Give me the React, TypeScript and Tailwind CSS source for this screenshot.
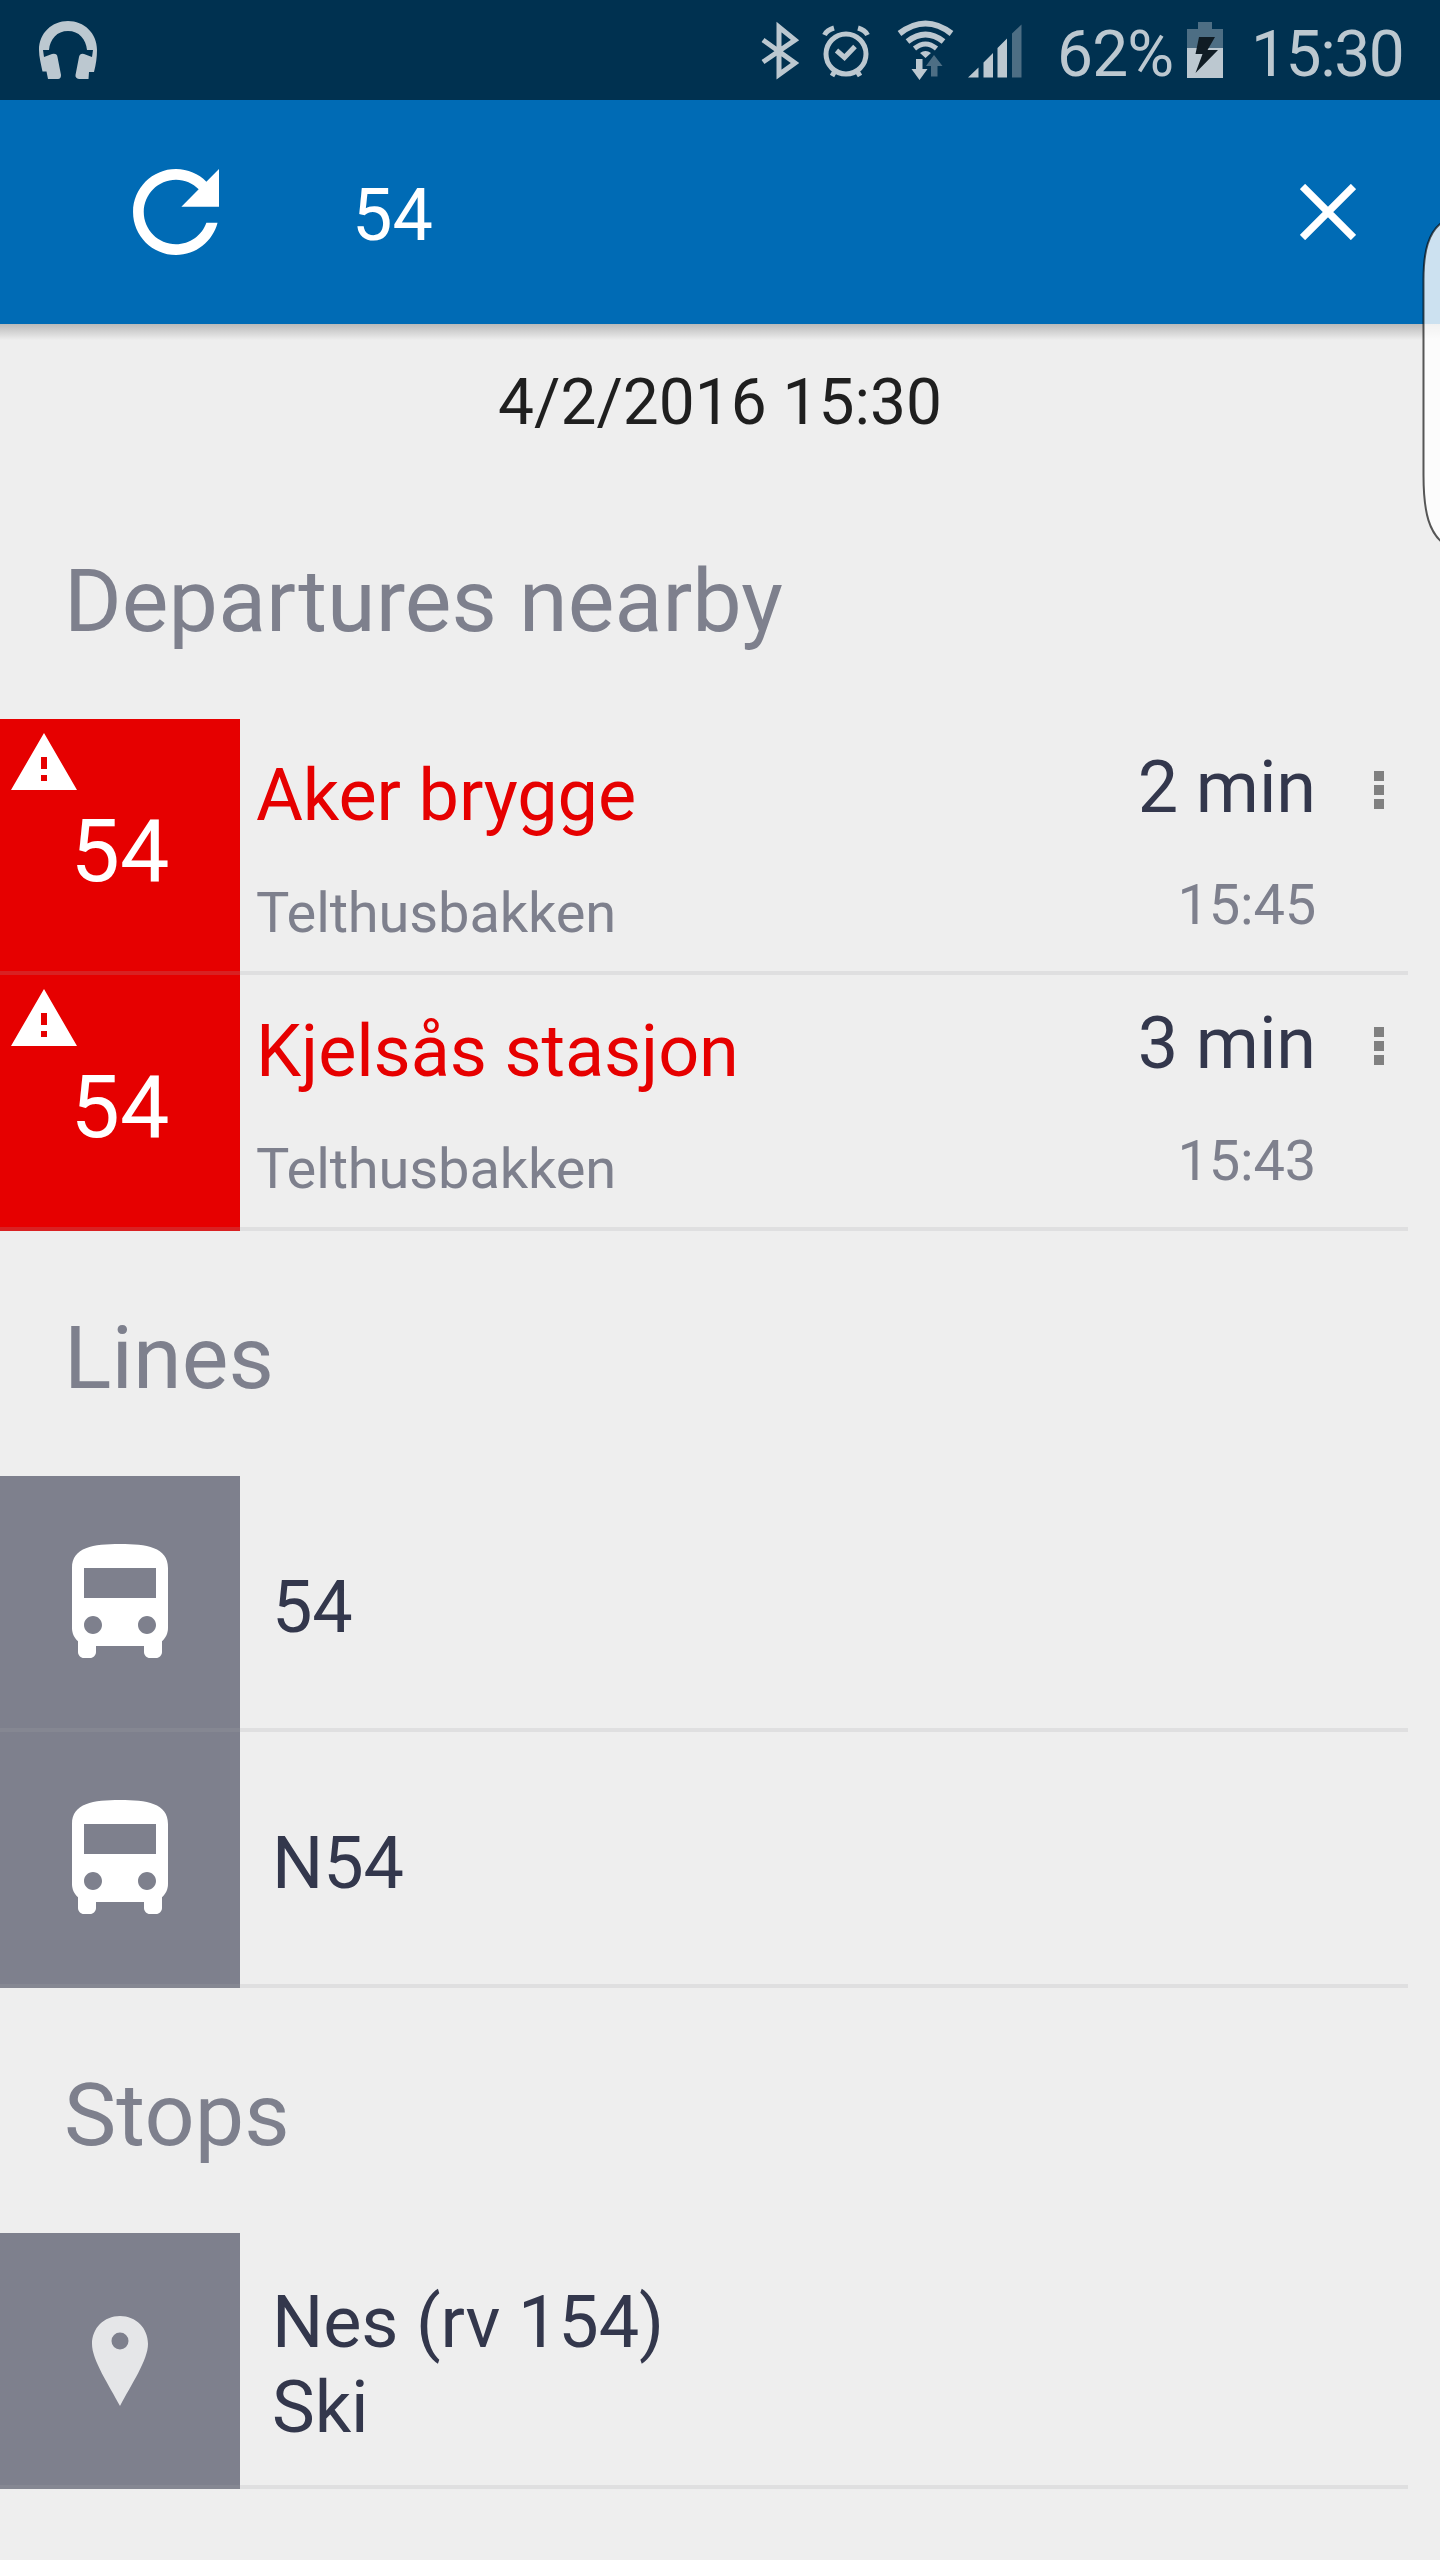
import React from "react";

function Headphones() {
  return (
    <svg className="h-[60px] w-[60px]" viewBox="38 21 60 60" fill="#bcc8d0">
      <path d="M39 51C39 34 52 22 68 22S97 34 97 51C97 58 96 65 94 73H89L88.500 80H79Q75 79 75.500 76L79 58Q80 54 84 55L92 58L93 51H87C86 40 79 32 68 32S50 40 49 51H43L44 58L52 55Q57 54 57.500 58L61 76Q61 80 58 80H48L46.500 72.500H42.500C41 65 39 58 39 51Z" />
    </svg>
  );
}

function StatusIcons() {
  return (
    <svg className="h-[100px] w-[280px]" viewBox="760 0 280 100">
      <path d="M763 40L795 63L779 74.500V27L795 40L763 62" fill="none" stroke="#bcc8d0" strokeWidth="5" />
      <g fill="none" stroke="#bcc8d0" strokeWidth="5">
        <circle cx="846" cy="54" r="20" />
        <path d="M836.500 50.500L844.500 57.500L855 46.500" />
        <path d="M824.500 35Q827 30 834 28M867.500 35Q865 30 858 28M835 71L832 76M857 71L860 76" />
        <path d="M899.500 33.500Q925.500 13.500 951.500 33.500" strokeWidth="6" />
        <path d="M907.500 41.500Q925.500 27.500 943.500 41.500" strokeWidth="6" />
        <path d="M914.500 48.500Q925.500 39.500 936.500 48.500" strokeWidth="5" />
      </g>
      <path d="M920 53Q925.500 49 931 53L925.500 58ZM916 59H922.500V69H927.500L919.500 80L911.500 69H916ZM968 77.500L978.500 67.500V77.500ZM983.500 62.500L993 53V77.500H983.500ZM997.500 48L1007 38.500V77.500H997.500Z" fill="#bcc8d0" />
      <path d="M934 55L942.500 66H937.500V76.500H931V66H926ZM1012 33.500L1021.500 24.500V77.500H1012Z" fill="#4d6e84" />
    </svg>
  );
}

function Battery() {
  return (
    <svg className="h-[56px] w-[36px]" viewBox="0 0 36 56">
      <path d="M11 0H25V7H36V26H0V7H11Z" fill="#4d6e84" />
      <path d="M0 26H36V56H0Z" fill="#bcc8d0" />
      <path d="M12 15H28L20.500 28H31L8.500 51L15.500 32H8.500Z" fill="#101c24" />
    </svg>
  );
}

function Warning() {
  return (
    <svg className="absolute top-[14px] left-[11px] h-[57px] w-[66px]" viewBox="0 0 66 57">
      <path fill="#fff" fillRule="evenodd" d="M33 0L66 57H0ZM30 24V36H36V24ZM30 42V48H36V42Z" />
    </svg>
  );
}

function Bus() {
  return (
    <svg className="mb-[6px] h-[114px] w-[96px]" viewBox="4 2 16 19" fill="#fff">
      <path d="M4 16c0 .88.39 1.670 1 2.220V20c0 .55.45 1 1 1h1c.55 0 1-.45 1-1v-1h8v1c0 .55.45 1 1 1h1c.55 0 1-.45 1-1v-1.780c.61-.55 1-1.340 1-2.220V6c0-3.500-3.580-4-8-4s-8 .5-8 4v10zm3.500 1c-.83 0-1.500-.67-1.500-1.500S6.670 14 7.500 14s1.500.67 1.500 1.500S8.330 17 7.500 17zm9 0c-.83 0-1.500-.67-1.500-1.500s.67-1.500 1.500-1.500 1.500.67 1.500 1.500-.67 1.500-1.500 1.500zm1.500-6H6V6h12v5z" />
    </svg>
  );
}

function Pin() {
  return (
    <svg className="h-[90px] w-[56px]" viewBox="0 0 56 90">
      <path fill="#e5e6e8" fillRule="evenodd" d="M28 0C44 0 56 12 56 28C56 44 39 69 28 90C17 69 0 44 0 28C0 12 12 0 28 0ZM28 16.500A8.500 8.500 0 1 0 28 33.500A8.500 8.500 0 1 0 28 16.500Z" />
    </svg>
  );
}

function Heading({ children }: { children: React.ReactNode }) {
  return <h2 className="h-[245px] pt-[9px] pl-[64px] text-[88px] leading-[235px] font-normal tracking-[0.1px] text-[#7e808d]">{children}</h2>;
}

function Divider() {
  return <div className="absolute bottom-0 left-0 h-1 w-full bg-[#a5a6ac]/20" />;
}

function Departure({ dest, wait, time }: { dest: string; wait: string; time: string }) {
  return (
    <li className="relative flex h-[256px] w-[1408px]">
      <div className="relative w-[240px] bg-[#e60000] text-center text-[88px] leading-[263px] text-white">
        <Warning />
        54
      </div>
      <div className="flex-1 pt-[34px] pl-[16px]">
        <div className="text-[72px] leading-[85px] tracking-[-0.12px] text-[#e60000]">{dest}</div>
        <div className="mt-[42px] text-[56px] leading-[66px] tracking-[-0.12px] text-[#7e808d]">Telthusbakken</div>
      </div>
      <div className="pt-[26px] text-right">
        <div className="text-[72px] leading-[85px] tracking-[-0.1px] text-[#33374c]">{wait}</div>
        <div className="mt-[42px] text-[56px] leading-[66px] tracking-[-0.2px] text-[#7e808d]">{time}</div>
      </div>
      <div className="flex w-[92px] flex-col items-center gap-[4px] pt-[52px] pl-[34px]">
        <i className="h-[10px] w-[10px] bg-[#808080]" />
        <i className="h-[10px] w-[10px] bg-[#808080]" />
        <i className="h-[10px] w-[10px] bg-[#808080]" />
      </div>
      <Divider />
    </li>
  );
}

function Result({ icon, children }: { icon: React.ReactNode; children: React.ReactNode }) {
  return (
    <li className="relative flex h-[256px] w-[1408px]">
      <div className="flex w-[240px] items-center justify-center bg-[#7e808d]">{icon}</div>
      <div className="flex flex-1 flex-col justify-center pt-[7px] pl-[32px] text-[72px] leading-[85px] tracking-[-0.12px] text-[#33374c]">{children}</div>
      <Divider />
    </li>
  );
}

export default function App() {
  return (
    <div className="relative h-[2560px] w-[1440px] overflow-hidden bg-[#eeeeee] font-['Roboto',sans-serif]">
      <div className="flex h-[100px] items-center bg-[#003150] pl-[38px] text-[64px] leading-[81px] text-[#bcc8d0]">
        <Headphones />
        <div className="ml-[662px] flex items-center">
          <StatusIcons />
          <span className="ml-[17px] w-[130px] pt-[9px] tracking-[-0.8px]">62%</span>
          <Battery />
          <span className="ml-[28px] pt-[9px] tracking-[-1.4px]">15:30</span>
        </div>
      </div>
      <header className="flex h-[224px] items-center bg-[#006bb5] pl-[133px]">
        <svg className="h-[86px] w-[86px]" viewBox="4 4 16 16" fill="#fff">
          <path d="M17.650 6.350C16.200 4.900 14.210 4 12 4c-4.420 0-7.990 3.580-7.990 8s3.570 8 7.990 8c3.730 0 6.840-2.550 7.730-6h-2.080c-.82 2.330-3.040 4-5.650 4-3.310 0-6-2.690-6-6s2.690-6 6-6c1.660 0 3.140.69 4.220 1.780L13 11h7V4l-2.350 2.350z" />
        </svg>
        <span className="ml-[133px] flex-1 pt-[7px] text-[72px] leading-[85px] text-white">54</span>
        <svg className="mr-[84px] h-[56px] w-[56px]" viewBox="0 0 56 56">
          <path d="M2.500 2.500L53.500 53.500M53.500 2.500L2.500 53.500" stroke="#fff" strokeWidth="7.500" />
        </svg>
      </header>
      <div className="h-[16px] bg-linear-to-b from-[#bababa] to-[#eeeeee]" />
      <div className="h-[134px] pt-[25px] text-center text-[64px] leading-[75px] text-[#1f1f1f]">4/2/2016 15:30</div>
      <Heading>Departures nearby</Heading>
      <ul>
        <Departure dest="Aker brygge" wait="2 min" time="15:45" />
        <Departure dest="Kjelsås stasjon" wait="3 min" time="15:43" />
      </ul>
      <Heading>Lines</Heading>
      <ul>
        <Result icon={<Bus />}>54</Result>
        <Result icon={<Bus />}>N54</Result>
      </ul>
      <Heading>Stops</Heading>
      <ul>
        <Result icon={<Pin />}>
          <div className="pt-px">Nes (rv 154)</div>
          <div>Ski</div>
        </Result>
      </ul>
      <svg className="absolute top-[220px] left-[1420px] h-[324px] w-[20px]" viewBox="1420 220 20 324">
        <path d="M1444 221C1428 231 1423.500 252 1423.500 280V475C1423.500 515 1430 533 1444 544" fill="#fff" fillOpacity=".8" stroke="#000" strokeOpacity=".65" strokeWidth="2" />
      </svg>
    </div>
  );
}
